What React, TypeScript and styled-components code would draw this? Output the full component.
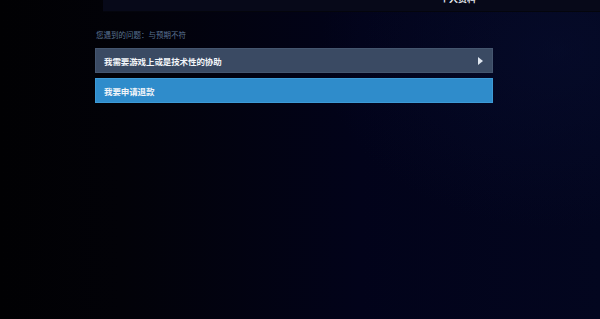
import React from "react";
import styled, { createGlobalStyle } from "styled-components";

const Global = createGlobalStyle`
  html, body { margin: 0; padding: 0; }
  body {
    width: 600px;
    height: 319px;
    overflow: hidden;
    background:
      radial-gradient(ellipse 240px 180px at 560px 50px, rgba(8, 16, 52, 0.45), rgba(0,0,0,0) 100%),
      linear-gradient(to right, #010103 0%, #020208 20%, #02031a 60%, #03061f 100%);
    font-family: "Noto Sans CJK SC", "Noto Sans", sans-serif;
  }
`;

const Page = styled.div`
  width: 600px;
  height: 319px;
  display: flex;
  flex-direction: column;
`;

const TopBar = styled.div`
  margin-left: 103px;
  height: 11px;
  background: #070919;
  border-bottom: 1px solid #04050c;
  overflow: hidden;
  display: flex;
  justify-content: flex-end;
  padding-right: 124px;
`;

const TopLink = styled.span`
  color: #e8ecf2;
  font-size: 9px;
  line-height: 9px;
  margin-top: -6px;
  font-weight: 700;
`;

const Content = styled.div`
  margin-left: 95px;
  width: 398px;
  display: flex;
  flex-direction: column;
  padding-top: 18px;
`;

const Label = styled.div`
  color: #5a7292;
  font-size: 7.5px;
  line-height: 10px;
  margin-left: 1px;
  margin-bottom: 8px;
`;

const Options = styled.div`
  display: flex;
  flex-direction: column;
  gap: 5px;
`;

const Option = styled.div<{ $active?: boolean }>`
  box-sizing: border-box;
  height: 25px;
  display: flex;
  align-items: center;
  justify-content: space-between;
  padding: 0 9px 0 8px;
  background: ${(p) => (p.$active ? "#2f8ccb" : "#3a4a63")};
  border: 1px solid ${(p) => (p.$active ? "#3d9ad6" : "#45566f")};
  color: #f2f5f9;
  font-size: 8.5px;
  font-weight: 700;
  letter-spacing: -0.1px;
`;

const Arrow = styled.svg`
  width: 5px;
  height: 8px;
  display: block;
`;

export default function App() {
  return (
    <Page>
      <Global />
      <TopBar>
        <TopLink>个人资料</TopLink>
      </TopBar>
      <Content>
        <Label>您遇到的问题：与预期不符</Label>
        <Options>
          <Option>
            <span>我需要游戏上或是技术性的协助</span>
            <Arrow viewBox="0 0 5 8">
              <path d="M0 0 L5 4 L0 8 Z" fill="#dfe6ef" />
            </Arrow>
          </Option>
          <Option $active>
            <span>我要申请退款</span>
          </Option>
        </Options>
      </Content>
    </Page>
  );
}
